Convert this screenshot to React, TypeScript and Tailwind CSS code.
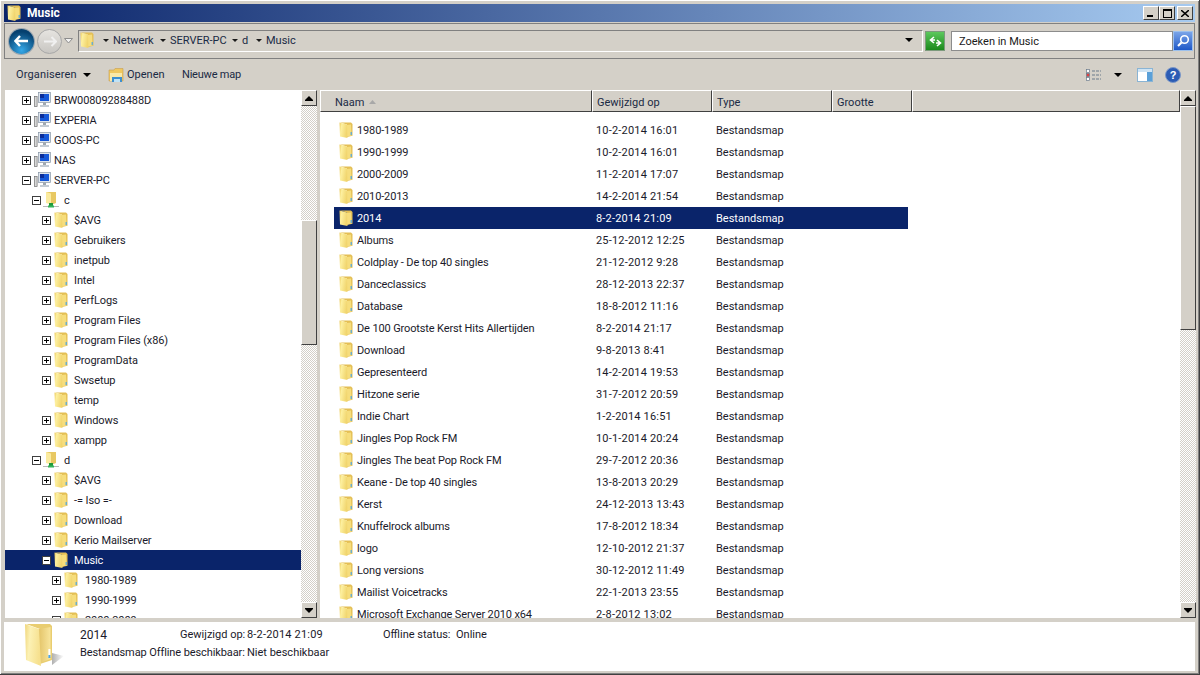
import React from "react";

const font = { fontFamily: 'Roboto,"Noto Sans",sans-serif' };

function Folder() {
  return (
    <svg width="16" height="16" viewBox="0 0 16 16" className="shrink-0">
      <defs>
        <linearGradient id="fl" x1="0" y1="0" x2="1" y2="0.3">
          <stop offset="0" stopColor="#ecc95a" />
          <stop offset="0.3" stopColor="#fdf0a0" />
          <stop offset="1" stopColor="#f1d56e" />
        </linearGradient>
      </defs>
      <path d="M2 0.5 L13 0.5 L14.5 2 L14.5 13.8 L9 15 L9 2.5 Z" fill="#e4bf55" />
      <path d="M9 3 L13 2.5 L13.5 13.6 L9 14.6 Z" fill="#f6dd7c" />
      <path d="M1.5 0.5 L9 2.5 L9.5 16 L2 14.6 Z" fill="url(#fl)" />
      <rect x="12.6" y="10" width="1.2" height="3" fill="#4ea6e4" />
    </svg>
  );
}

function BigFolder() {
  return (
    <svg width="44" height="46" viewBox="0 0 44 46" className="shrink-0">
      <defs>
        <linearGradient id="bfl" x1="0" y1="0" x2="1" y2="0.2">
          <stop offset="0" stopColor="#f0d67c" />
          <stop offset="0.35" stopColor="#fcf1b4" />
          <stop offset="1" stopColor="#f6e08e" />
        </linearGradient>
        <linearGradient id="bfs" x1="0" y1="0" x2="1" y2="0">
          <stop offset="0" stopColor="#b0b0b0" />
          <stop offset="1" stopColor="#ffffff" />
        </linearGradient>
        <linearGradient id="bfr" x1="0" y1="0" x2="1" y2="0">
          <stop offset="0" stopColor="#e4c56a" />
          <stop offset="1" stopColor="#f8e59c" />
        </linearGradient>
      </defs>
      <path d="M28 30 L40 33 L28 42 Z" fill="url(#bfs)" />
      <path d="M2 1 H26 L28 3 V37 L16 41 V6 Z" fill="#e9cd70" />
      <path d="M15 6 L26.5 4 V36 L15 40 Z" fill="url(#bfr)" />
      <path d="M1 1 L15 6 L17 43 L2 37 Z" fill="url(#bfl)" />
      <rect x="24.4" y="26" width="2" height="8" fill="#ffffff" />
      <rect x="24.4" y="32" width="2" height="3" fill="#4ea6e4" />
    </svg>
  );
}

function Drive() {
  return (
    <svg width="16" height="16" viewBox="0 0 16 16" className="shrink-0">
      <path d="M3 0 H13 V11 L8 13 Z" fill="#e8c862" />
      <path d="M3 0 L8 1.5 V12.5 L3 11 Z" fill="#fbeb9f" />
      <rect x="6" y="11" width="4" height="3" fill="#1f9a3a" />
      <rect x="0" y="14" width="5" height="1" fill="#b8b8b8" />
      <rect x="11" y="14" width="5" height="1" fill="#b8b8b8" />
      <rect x="5" y="13.5" width="6" height="2" fill="#35b45a" />
    </svg>
  );
}

function Computer() {
  return (
    <svg width="17" height="16" viewBox="0 0 17 16" className="shrink-0">
      <rect x="0.5" y="4.5" width="2.6" height="10" fill="#d8d8d8" stroke="#707070" strokeWidth="0.7" />
      <rect x="4.4" y="0.4" width="12.2" height="10" fill="#dfe6ee" stroke="#8a97a6" strokeWidth="0.7" />
      <rect x="6" y="2" width="9" height="7" fill="#1557d8" />
      <rect x="6" y="2" width="4" height="4" fill="#0a2c9a" />
      <rect x="9" y="10.5" width="3" height="3" fill="#a0a8b0" />
      <rect x="6" y="13" width="9" height="2" fill="#c4ccd4" />
    </svg>
  );
}

function Exp({ open }: { open?: boolean }) {
  return (
    <span className="relative block h-[9px] w-[9px] shrink-0 border border-[#404040] bg-white">
      <span className="absolute left-[1px] top-[3px] h-px w-[5px] bg-black" />
      {!open && <span className="absolute left-[3px] top-[1px] h-[5px] w-px bg-black" />}
    </span>
  );
}

type T = { l: string; d: number; k?: "pc" | "drive"; o?: boolean; s?: boolean; n?: boolean };
const tree: T[] = [
  { l: "BRW00809288488D", d: 0, k: "pc" },
  { l: "EXPERIA", d: 0, k: "pc" },
  { l: "GOOS-PC", d: 0, k: "pc" },
  { l: "NAS", d: 0, k: "pc" },
  { l: "SERVER-PC", d: 0, k: "pc", o: true },
  { l: "c", d: 1, k: "drive", o: true },
  { l: "$AVG", d: 2 },
  { l: "Gebruikers", d: 2 },
  { l: "inetpub", d: 2 },
  { l: "Intel", d: 2 },
  { l: "PerfLogs", d: 2 },
  { l: "Program Files", d: 2 },
  { l: "Program Files (x86)", d: 2 },
  { l: "ProgramData", d: 2 },
  { l: "Swsetup", d: 2 },
  { l: "temp", d: 2, n: true },
  { l: "Windows", d: 2 },
  { l: "xampp", d: 2 },
  { l: "d", d: 1, k: "drive", o: true },
  { l: "$AVG", d: 2 },
  { l: "-= Iso =-", d: 2 },
  { l: "Download", d: 2 },
  { l: "Kerio Mailserver", d: 2 },
  { l: "Music", d: 2, o: true, s: true },
  { l: "1980-1989", d: 3 },
  { l: "1990-1999", d: 3 },
  { l: "2000-2009", d: 3 },
];

const files: [string, string][] = [
  ["1980-1989", "10-2-2014 16:01"],
  ["1990-1999", "10-2-2014 16:01"],
  ["2000-2009", "11-2-2014 17:07"],
  ["2010-2013", "14-2-2014 21:54"],
  ["2014", "8-2-2014 21:09"],
  ["Albums", "25-12-2012 12:25"],
  ["Coldplay - De top 40 singles", "21-12-2012 9:28"],
  ["Danceclassics", "28-12-2013 22:37"],
  ["Database", "18-8-2012 11:16"],
  ["De 100 Grootste Kerst Hits Allertijden", "8-2-2014 21:17"],
  ["Download", "9-8-2013 8:41"],
  ["Gepresenteerd", "14-2-2014 19:53"],
  ["Hitzone serie", "31-7-2012 20:59"],
  ["Indie Chart", "1-2-2014 16:51"],
  ["Jingles Pop Rock FM", "10-1-2014 20:24"],
  ["Jingles The beat Pop Rock FM", "29-7-2012 20:36"],
  ["Keane - De top 40 singles", "13-8-2013 20:29"],
  ["Kerst", "24-12-2013 13:43"],
  ["Knuffelrock albums", "17-8-2012 18:34"],
  ["logo", "12-10-2012 21:37"],
  ["Long versions", "30-12-2012 11:49"],
  ["Mailist Voicetracks", "22-1-2013 23:55"],
  ["Microsoft Exchange Server 2010 x64", "2-8-2012 13:02"],
];

const raised =
  "border border-t-white border-l-white border-r-[#404040] border-b-[#404040] bg-[#d4d0c8]";
const track =
  "bg-[repeating-conic-gradient(#d4d0c8_0_25%,#ffffff_0_50%)] bg-[length:2px_2px]";

function ScrollBtn({ up }: { up?: boolean }) {
  return (
    <div className={`flex h-4 w-4 shrink-0 items-center justify-center ${raised}`}>
      <svg width="8" height="5" viewBox="0 0 8 5">
        <path d={up ? "M4 0 L8 4 V5 H0 V4 Z" : "M0 0 H8 V1 L4 5 L0 1 Z"} fill="#000" />
      </svg>
    </div>
  );
}

function Scrollbar({ top, thumb }: { top: number; thumb: number }) {
  return (
    <div className="flex w-4 shrink-0 flex-col">
      <ScrollBtn up />
      <div className={`min-h-0 flex-1 ${track}`}>
        <div style={{ marginTop: top, height: thumb }} className={raised} />
      </div>
      <ScrollBtn />
    </div>
  );
}

function Crumb({ t, w }: { t: string; w: string }) {
  return (
    <span className={`flex items-center ${w}`}>
      <svg width="6" height="3" viewBox="0 0 6 3" className="mr-[4px] shrink-0">
        <path d="M0 0 H6 L3 3 Z" fill="#1a1a1a" />
      </svg>
      <span>{t}</span>
    </span>
  );
}

function Head({ t, w, sort }: { t: string; w: string; sort?: boolean }) {
  return (
    <div className={`flex h-full shrink-0 items-center ${w} ${raised} pl-[4px] pt-[2px]`}>
      <span className={sort ? "pl-[10px]" : ""}>{t}</span>
      {sort && (
        <svg width="7" height="4" viewBox="0 0 7 4" className="ml-[5px]">
          <path d="M3.5 0 L7 4 H0 Z" fill="#a8a8a8" />
        </svg>
      )}
    </div>
  );
}

export default function App() {
  return (
    <div
      style={font}
      className="flex h-[675px] w-[1200px] flex-col overflow-hidden whitespace-nowrap border-b border-r border-b-[#404040] border-r-[#404040] bg-[#d4d0c8] text-[11px] leading-none text-[#1a2a44] shadow-[inset_1px_1px_0_#ffffff,inset_-1px_-1px_0_#808080]"
    >
      <div className="mx-[4px] mt-[4px] flex h-[18px] shrink-0 items-center justify-between bg-[linear-gradient(90deg,#0a246a,#a6caf0)] pl-[2px] pr-[2px]">
        <div className="flex items-center gap-[5px] text-[12px] font-bold text-white">
          <Folder />
          <span>Music</span>
        </div>
        <div className="flex items-center">
          {["min", "max"].map((k) => (
            <div key={k} className={`flex h-[14px] w-4 items-center justify-center ${raised}`}>
              {k === "min" ? (
                <span className="-ml-[2px] mt-[6px] block h-[2px] w-[6px] bg-black" />
              ) : (
                <span className="block h-[9px] w-[9px] border border-t-2 border-black" />
              )}
            </div>
          ))}
          <div className={`ml-[2px] flex h-[14px] w-4 items-center justify-center ${raised}`}>
            <svg width="8" height="7" viewBox="0 0 8 7">
              <path d="M0 0 L8 7 M8 0 L0 7" stroke="#000" strokeWidth="1.5" />
            </svg>
          </div>
        </div>
      </div>

      <div className="mx-[4px] mt-[1px] flex h-[36px] shrink-0 items-center border border-[#808080] pl-[4px] pr-[1px]">
        <div className="relative flex h-[25px] w-[25px] items-center justify-center rounded-full bg-[radial-gradient(circle_at_50%_85%,#35a8e8,#05406f_75%)] shadow-[0_0_0_1px_#9aa4ae]">
          <svg width="15" height="12" viewBox="0 0 15 12">
            <path d="M6 1 L1.5 6 L6 11 M2 6 H14" stroke="#fff" strokeWidth="2.4" fill="none" />
          </svg>
        </div>
        <div className="ml-[3px] flex h-[25px] w-[25px] items-center justify-center rounded-full border border-[#a8a8a8] bg-[linear-gradient(#e6e4e0,#c8c6c2)]">
          <svg width="14" height="11" viewBox="0 0 14 11">
            <path d="M8.5 1 L13 5.5 L8.5 10 M12.5 5.5 H1" stroke="#f0f0f0" strokeWidth="2" fill="none" />
          </svg>
        </div>
        <svg width="9" height="6" viewBox="0 0 9 6" className="ml-[2px] mr-[5px]">
          <path d="M0.5 0.5 H8.5 L4.5 5 Z" fill="#f2f2f2" stroke="#8c8c8c" />
        </svg>
        <div className="flex h-[22px] min-w-0 flex-1 items-center border border-b-white border-l-[#808080] border-r-white border-t-[#808080] pb-[2px]">
          <Folder />
          <span className="w-[8px]" />
          <Crumb t="Netwerk" w="w-[57px]" />
          <Crumb t="SERVER-PC" w="w-[72px]" />
          <Crumb t="d" w="w-[24px]" />
          <Crumb t="Music" w="w-[50px]" />
          <span className="flex-1" />
          <svg width="8" height="4" viewBox="0 0 8 4" className="mr-[9px]">
            <path d="M0 0 H8 L4 4 Z" fill="#000" />
          </svg>
        </div>
        <div className="ml-[2px] flex h-[20px] w-[20px] items-center justify-center border border-[#7c9a7c] bg-[linear-gradient(#5cc85c,#1c8a1c)]">
          <svg width="15" height="11" viewBox="0 0 15 11">
            <path d="M6 1 L2.5 4 L6 7 M2.5 4 H7 M9 10 L12.5 7 L9 4 M12.5 7 H8" stroke="#fff" strokeWidth="1.6" fill="none" />
          </svg>
        </div>
        <div className="ml-[6px] flex h-[20px] w-[222px] items-center border border-[#8c8c8c] bg-white pl-[7px] text-[#1a1a1a]">
          Zoeken in Music
        </div>
        <div className="flex h-[20px] w-[20px] items-center justify-center border border-[#9cc0ec] bg-[linear-gradient(#7aa4e8,#1e58c8)]">
          <svg width="14" height="14" viewBox="0 0 14 14">
            <circle cx="8.5" cy="5.5" r="3.8" stroke="#fff" strokeWidth="1.6" fill="none" />
            <path d="M5.5 8.5 L2 12" stroke="#fff" strokeWidth="2.2" />
          </svg>
        </div>
      </div>

      <div className="mx-[5px] flex h-[31px] shrink-0 items-center pl-[11px] pr-[13px]">
        <span className="w-[67px] tracking-[0.15px]">Organiseren</span>
        <svg width="8" height="4" viewBox="0 0 8 4">
          <path d="M0 0 H8 L4 4 Z" fill="#000" />
        </svg>
        <svg width="17" height="16" viewBox="0 0 17 16" className="ml-[17px] mr-[2px]">
          <path d="M1 3 H6 L7 1.5 H15 V14 H1 Z" fill="#f0c860" stroke="#c8a050" strokeWidth="0.6" />
          <path d="M2 6 H14 V14 H2 Z" fill="#fae9a8" />
          <path d="M4 10 H14 V15 H4 Z" fill="#3d8fd0" />
          <path d="M6 12 H12 V15 H6 Z" fill="#bfe2f6" />
        </svg>
        <span className="w-[55px]">Openen</span>
        <span className="tracking-[-0.2px]">Nieuwe map</span>
        <span className="flex-1" />
        <svg width="15" height="12" viewBox="0 0 15 12">
          <rect x="0.5" y="0.5" width="3" height="3" fill="#fff" stroke="#6a7a8a" strokeWidth="0.7" />
          <rect x="0.5" y="4.5" width="3" height="3" fill="#e04040" stroke="#6a7a8a" strokeWidth="0.7" />
          <rect x="0.5" y="8.5" width="3" height="3" fill="#fff" stroke="#6a7a8a" strokeWidth="0.7" />
          <path d="M6 2 H15 M6 6 H15 M6 10 H15" stroke="#6a7a8a" strokeWidth="1" strokeDasharray="3 1" />
        </svg>
        <svg width="8" height="4" viewBox="0 0 8 4" className="ml-[13px]">
          <path d="M0 0 H8 L4 4 Z" fill="#000" />
        </svg>
        <svg width="16" height="14" viewBox="0 0 16 14" className="ml-[15px]">
          <rect x="0.5" y="0.5" width="15" height="13" fill="#fff" stroke="#8ab4d4" />
          <rect x="10" y="1" width="5" height="12" fill="#5aa0d8" />
          <rect x="1" y="1" width="14" height="3" fill="#cfe4f4" />
        </svg>
        <svg width="16" height="16" viewBox="0 0 16 16" className="ml-[12px]">
          <circle cx="8" cy="8" r="7.5" fill="#2c5cb4" stroke="#7c98c8" />
          <text x="8" y="12" textAnchor="middle" fontSize="11" fontWeight="700" fill="#fff" fontFamily="Liberation Sans">?</text>
        </svg>
      </div>

      <div className="flex min-h-0 flex-1">
        <div className="ml-[5px] flex w-[312px] min-w-0 shrink-0">
          <div className="min-w-0 flex-1 overflow-hidden bg-white">
            {tree.map((r, i) => (
              <div
                key={i}
                style={{ paddingLeft: 17 + r.d * 10 }}
                className={`flex h-[20px] items-center ${r.s ? "bg-[#0a246a] text-white" : "text-[#1a1a2a]"}`}
              >
                {r.n ? <span className="block w-[9px]" /> : <Exp open={r.o} />}
                <span className={r.k === "pc" ? "ml-[3px]" : "ml-[2px]"}>
                  {r.k === "pc" ? <Computer /> : r.k === "drive" ? <Drive /> : <Folder />}
                </span>
                <span className={`tracking-[-0.1px] ${r.d === 3 ? "ml-[6px]" : r.k === "pc" ? "ml-[3px]" : "ml-[5px]"}`}>{r.l}</span>
              </div>
            ))}
          </div>
          <Scrollbar top={114} thumb={125} />
        </div>
        <div className="w-[3px] shrink-0" />
        <div className="flex min-w-0 flex-1 flex-col bg-white">
          <div className="flex h-[22px] shrink-0">
            <Head t="Naam" w="w-[272px]" sort />
            <Head t="Gewijzigd op" w="w-[120px]" />
            <Head t="Type" w="w-[120px]" />
            <Head t="Grootte" w="w-[80px]" />
            <div className={`h-full flex-1 ${raised}`} />
          </div>
          <div className="min-h-0 flex-1 overflow-hidden pl-[14px] pt-[7px]">
            {files.map(([n, d], i) => (
              <div
                key={i}
                className={`flex h-[22px] w-[574px] items-center ${i === 4 ? "bg-[#0a246a] text-white" : "text-[#1a1a2a]"}`}
              >
                <span className="ml-[4px]">
                  <Folder />
                </span>
                <span className="ml-[3px] w-[239px] shrink-0 tracking-[-0.13px]">{n}</span>
                <span className="w-[120px] shrink-0 tracking-[0.19px]">{d}</span>
                <span>Bestandsmap</span>
              </div>
            ))}
          </div>
        </div>
        <Scrollbar top={0} thumb={224} />
        <div className="w-[3px] shrink-0" />
      </div>

      <div className="mx-[4px] mb-[3px] mt-[4px] flex h-[49px] shrink-0 bg-white text-[#1a1a2a]">
        <div className="ml-[20px] mt-px w-[56px] shrink-0">
          <BigFolder />
        </div>
        <div className="flex flex-col pt-[6px]">
          <div className="flex h-[13px] items-center">
            <span className="w-[100px] text-[12px]">2014</span>
            <span className="w-[67px]">Gewijzigd op:</span>
            <span className="w-[136px] tracking-[0.19px]">8-2-2014 21:09</span>
            <span className="w-[73px]">Offline status:</span>
            <span>Online</span>
          </div>
          <div className="mt-[5px] flex h-[13px] items-center">
            <span className="w-[167px] tracking-[-0.1px]">Bestandsmap Offline beschikbaar:</span>
            <span>Niet beschikbaar</span>
          </div>
        </div>
      </div>
    </div>
  );
}
